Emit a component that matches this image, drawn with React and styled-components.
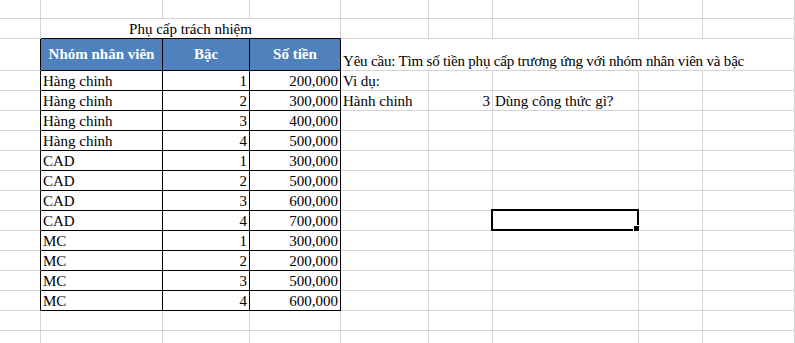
import React from 'react';
import styled, { createGlobalStyle } from 'styled-components';

const GRID = '#d4d4d4';
const INK = '#000000';
const NONE = 'transparent';

const Global = createGlobalStyle`
  html, body { margin: 0; padding: 0; background: #ffffff; }
  #root { width: 795px; height: 343px; overflow: hidden; }
`;

const Sheet = styled.div`
  display: grid;
  grid-template-columns: 41px 122px 87px 91px 88px 64px 146px 64px 1fr;
  grid-template-rows: 19px 20px 32px repeat(14, 20px);
  width: 795px;
  height: 343px;
  overflow: hidden;
  font-family: "Liberation Serif", "Times New Roman", serif;
  font-size: 15px;
  color: #000;
  background: #fff;
`;

const Cell = styled.div`
  position: relative;
  box-sizing: border-box;
  display: flex;
  align-items: ${(p) => (p.$valign === 'center' ? 'center' : 'flex-end')};
  justify-content: ${(p) =>
    p.$align === 'right' ? 'flex-end' : p.$align === 'center' ? 'center' : 'flex-start'};
  padding: 0 2px;
  border-right: 1px solid ${(p) => p.$right || GRID};
  border-bottom: 1px solid ${(p) => p.$bottom || GRID};
  grid-column: span ${(p) => p.$span || 1};
  letter-spacing: ${(p) => p.$tracking || 'normal'};
  white-space: nowrap;
  line-height: 17px;
  min-width: 0;
`;

const HeaderCell = styled(Cell)`
  background: #4f81bd;
  color: #ffffff;
  font-weight: 700;
`;

const Selection = styled.div`
  position: absolute;
  left: -2px;
  top: -2px;
  right: -1px;
  bottom: -1px;
  border: 2px solid #000;
  pointer-events: none;
  z-index: 2;
`;

const FillHandle = styled.div`
  position: absolute;
  right: -3px;
  bottom: -3px;
  width: 5px;
  height: 5px;
  background: #000;
  border: 1px solid #fff;
  z-index: 3;
`;

const data = [
  ['Hàng chinh', 1, '200,000'],
  ['Hàng chinh', 2, '300,000'],
  ['Hàng chinh', 3, '400,000'],
  ['Hàng chinh', 4, '500,000'],
  ['CAD', 1, '300,000'],
  ['CAD', 2, '500,000'],
  ['CAD', 3, '600,000'],
  ['CAD', 4, '700,000'],
  ['MC', 1, '300,000'],
  ['MC', 2, '200,000'],
  ['MC', 3, '500,000'],
  ['MC', 4, '600,000'],
];

const sideCells = {
  0: { e: 'Vi dụ:' },
  1: { e: 'Hành chinh', f: '3', g: 'Dùng công thức gì?' },
  7: { selected: true },
};

function EmptyRow({ k }) {
  return Array.from({ length: 9 }, (_, i) => <Cell key={`${k}-${i}`} />);
}

export default function App() {
  return (
    <>
      <Global />
      <Sheet>
        <EmptyRow k="r1" />

        <Cell />
        <Cell $span={3} $align="center" $bottom={INK}>Phụ cấp trách nhiệm</Cell>
        <Cell />
        <Cell />
        <Cell />
        <Cell />
        <Cell />

        <Cell $right={INK} />
        <HeaderCell $valign="center" $align="center" $right={INK} $bottom={INK}>Nhóm nhân viên</HeaderCell>
        <HeaderCell $valign="center" $align="center" $right={INK} $bottom={INK}>Bậc</HeaderCell>
        <HeaderCell $valign="center" $align="center" $right={INK} $bottom={INK}>Số tiền</HeaderCell>
        <Cell $right={NONE} $tracking="-0.19px">Yêu cầu: Tìm số tiền phụ cấp trương ứng với nhóm nhân viên và bậc</Cell>
        <Cell $right={NONE} />
        <Cell $right={NONE} />
        <Cell $right={NONE} />
        <Cell />

        {data.map(([group, level, amount], idx) => {
          const side = sideCells[idx] || {};
          return (
            <React.Fragment key={idx}>
              <Cell $right={INK} />
              <Cell $right={INK} $bottom={INK}>{group}</Cell>
              <Cell $right={INK} $bottom={INK} $align="right">{level}</Cell>
              <Cell $right={INK} $bottom={INK} $align="right">{amount}</Cell>
              <Cell>{side.e}</Cell>
              <Cell $align="right">{side.f}</Cell>
              <Cell>
                {side.g}
                {side.selected && (
                  <Selection>
                    <FillHandle />
                  </Selection>
                )}
              </Cell>
              <Cell />
              <Cell />
            </React.Fragment>
          );
        })}

        <EmptyRow k="r16" />
        <EmptyRow k="r17" />
      </Sheet>
    </>
  );
}
